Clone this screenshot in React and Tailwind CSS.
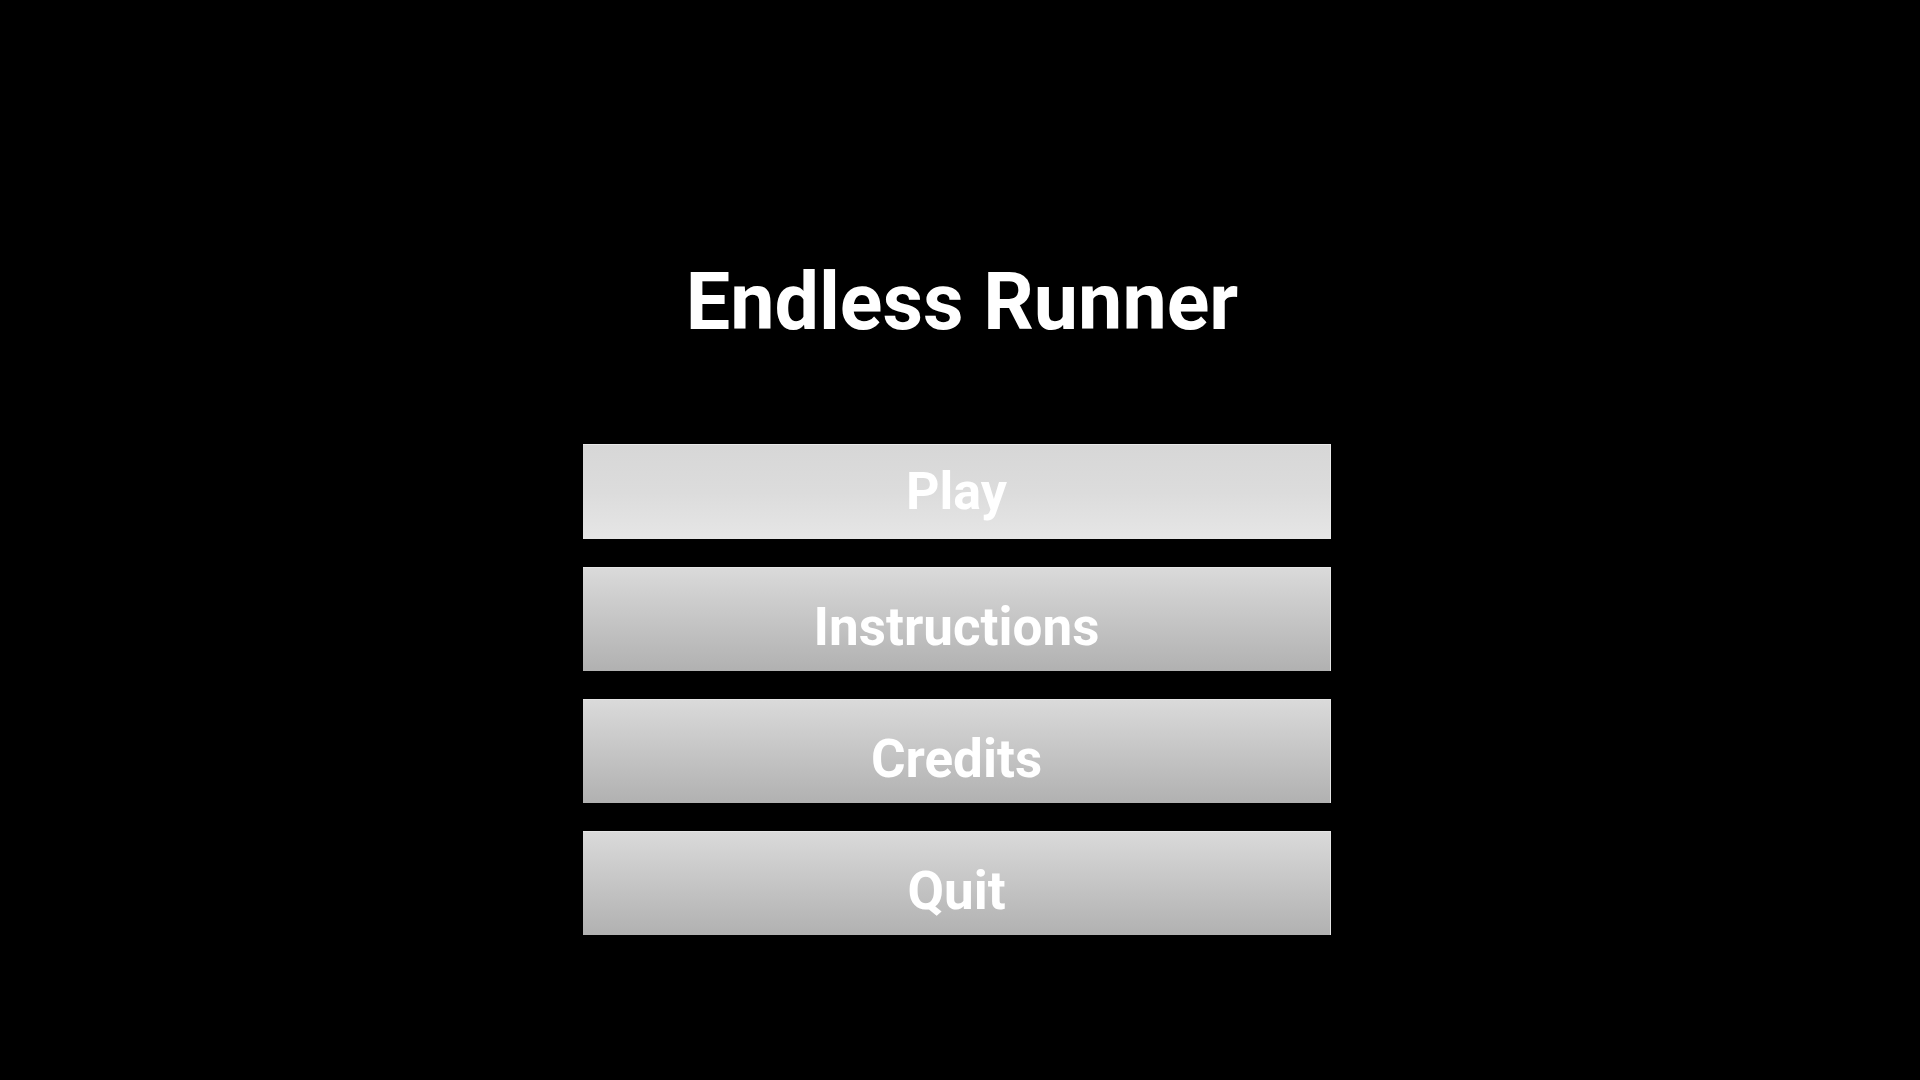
export default function App() {
  const items = [
    { label: 'Play', active: true },
    { label: 'Instructions' },
    { label: 'Credits' },
    { label: 'Quit' },
  ];

  return (
    <div
      className="min-h-screen w-full bg-black flex flex-col items-center pt-[263px]"
      style={{ fontFamily: 'Roboto, "Liberation Sans", sans-serif' }}
    >
      <h1 className="text-white font-bold text-[79px] leading-none pl-[4px]">Endless Runner</h1>

      <div className="mt-[102px] flex flex-col gap-[28px] w-[748px] mr-[6px]">
        {items.map((item) =>
          item.active ? (
            <button
              key={item.label}
              className="h-[95px] w-full flex items-center justify-center bg-gradient-to-b from-[#d7d7d7] via-[#dcdcdc] to-[#e6e6e6] border-t border-r border-[#e9e9e9] text-white font-bold text-[52px] leading-none"
            >
              {item.label}
            </button>
          ) : (
            <button
              key={item.label}
              className="h-[104px] w-full flex items-center justify-center pt-4 bg-gradient-to-b from-[#dadada] to-[#b1b1b1] border-t border-r border-[#e4e4e4] text-white font-bold text-[53px] leading-none"
            >
              {item.label}
            </button>
          )
        )}
      </div>
    </div>
  );
}
